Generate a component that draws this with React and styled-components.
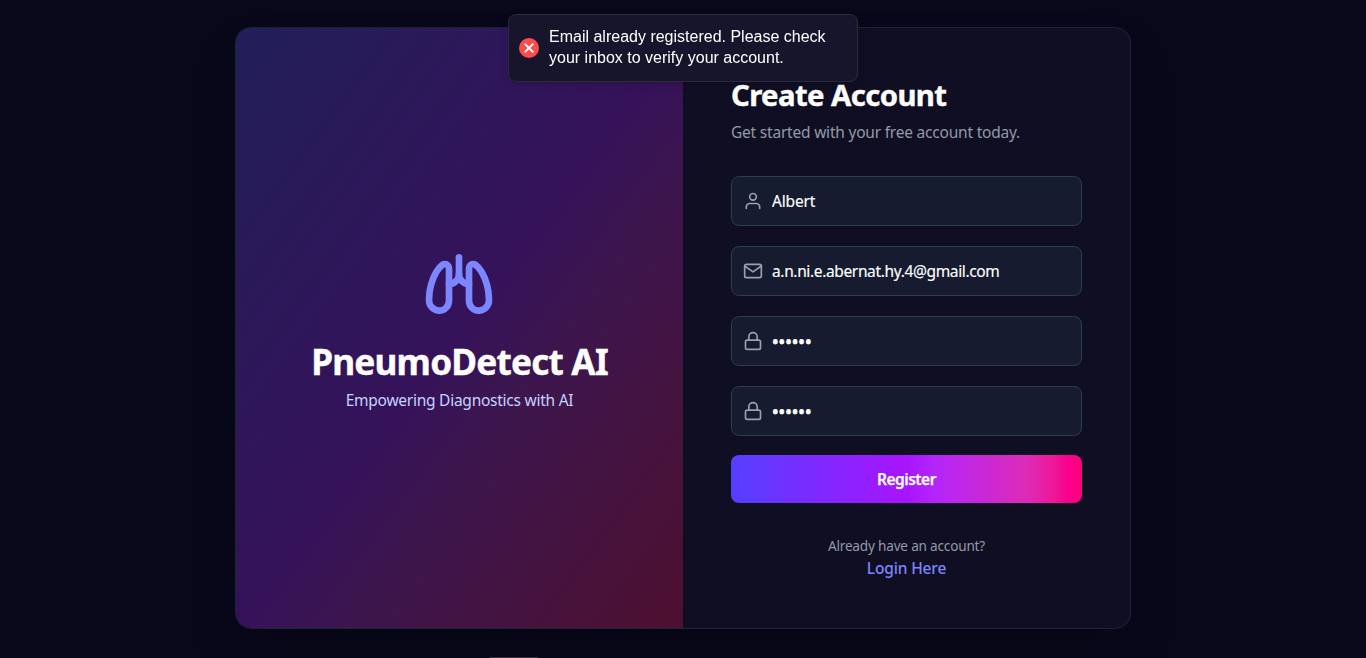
import React from "react";
import styled, { createGlobalStyle } from "styled-components";
import { FiUser, FiMail, FiLock } from "react-icons/fi";
import { TbLungs } from "react-icons/tb";

const GlobalStyle = createGlobalStyle`
  * { box-sizing: border-box; }
  body {
    margin: 0;
    background: #09081b;
    color: #fff;
    font-family: "Segoe UI", "Noto Sans", "Open Sans", sans-serif;
    overflow: hidden;
  }
`;

const Page = styled.main`
  height: 658px;
  padding-top: 27px;
  display: flex;
  flex-direction: column;
  align-items: center;
  justify-content: space-between;
  overflow: hidden;
`;

const Card = styled.section`
  width: 896px;
  height: 602px;
  display: flex;
  overflow: hidden;
  border: 1px solid #1a2637;
  border-radius: 16px;
  background: #100e23;
  box-shadow: 0 25px 50px -12px rgba(0, 0, 0, 0.25);
`;

const Brand = styled.div`
  width: 447px;
  padding-bottom: 1px;
  display: flex;
  flex-direction: column;
  align-items: center;
  justify-content: center;
  background: linear-gradient(to bottom right, #211f59, #35125a 50%, #3d164e 62%, #4e102f);
`;

const BrandIcon = styled(TbLungs)`
  color: #7c86ff;
  margin: 0 2px 17px 0;
`;

const BrandName = styled.h1`
  margin: 0;
  font-size: 35.2px;
  line-height: 40px;
  font-weight: 700;
  white-space: nowrap;
  -webkit-text-stroke: 0.4px #fff;
  letter-spacing: ${(p) => p.$track}px;
`;

const Tagline = styled.p`
  margin: 7px 0 0;
  font-size: 15.5px;
  line-height: 24px;
  color: #c6d2ff;
  letter-spacing: ${(p) => p.$track}px;
`;

const FormPanel = styled.div`
  flex: 1;
  padding: 48px 48px 0;
`;

const Title = styled.h2`
  margin: 1px 0 7px;
  font-size: 29.3px;
  line-height: 36px;
  font-weight: 700;
  white-space: nowrap;
  -webkit-text-stroke: 0.4px #fff;
  letter-spacing: ${(p) => p.$track}px;
`;

const Subtitle = styled.p`
  margin: 0 0 32px;
  font-size: 15.5px;
  line-height: 24px;
  color: #99a1af;
  opacity: 0.95;
  white-space: nowrap;
  letter-spacing: ${(p) => p.$track}px;
`;

const Form = styled.form`
  display: flex;
  flex-direction: column;
  gap: 20px;
`;

const Field = styled.label`
  height: 50px;
  padding: 0 12px 0 11px;
  display: flex;
  align-items: center;
  gap: 9px;
  border: 1px solid #2b3d51;
  border-radius: 8px;
  background: #161b2f;
  color: #99a1af;
`;

const FieldIcon = styled.svg`
  width: 20px;
  height: 20px;
  flex: none;
  stroke-width: 2;
`;

const Input = styled.input`
  flex: 1;
  min-width: 0;
  padding: 0;
  border: 0;
  outline: 0;
  background: transparent;
  color: #fff;
  font: 400 ${(p) => (p.type === "password" ? 17.5 : 15.5)}px/24px "Segoe UI", "Noto Sans", "Open Sans", sans-serif;
  -webkit-text-stroke: ${(p) => (p.type === "password" ? 0.8 : 0.15)}px #fff;
  letter-spacing: ${(p) => p.$track}px;
`;

const Submit = styled.button`
  height: 48px;
  margin-top: -1px;
  padding: 0;
  border: 0;
  border-radius: 8px;
  color: #fff;
  background: linear-gradient(to right, #553fff 0%, #a813ff 50%, #b425fb 58%, #dc2bb8 84%, #ee1899 92%, #f9008c 96%, #ff0080 98%);
  font: 600 15.5px/24px "Segoe UI", "Noto Sans", "Open Sans", sans-serif;
  -webkit-text-stroke: 0.25px #fff;
  letter-spacing: ${(p) => p.$track}px;
`;

const Footer = styled.div`
  margin-top: 32px;
  text-align: center;
`;

const Prompt = styled.p`
  margin: 0;
  font-size: 13.6px;
  line-height: 22px;
  color: #99a1af;
  opacity: 0.95;
  letter-spacing: ${(p) => p.$track}px;
`;

const LoginLink = styled.a`
  display: block;
  font-size: 15.5px;
  line-height: 23px;
  font-weight: 500;
  color: #7c86ff;
  letter-spacing: ${(p) => p.$track}px;
`;

const Toast = styled.div`
  position: fixed;
  top: 14px;
  left: 508px;
  width: 350px;
  height: 68px;
  padding: 0 10px;
  display: flex;
  align-items: center;
  gap: 10px;
  border: 1px solid #2c2a3d;
  border-radius: 8px;
  background: #17152b;
  box-shadow: 0 3px 10px rgba(0, 0, 0, 0.1), 0 3px 3px rgba(0, 0, 0, 0.05);
`;

const ToastMessage = styled.p`
  margin: 0 0 2px;
  font: 16px/21px "Liberation Sans", Arial, sans-serif;
  white-space: nowrap;
`;

const NextPanelEdge = styled.div`
  width: 48px;
  height: 1px;
  margin-right: 338px;
  background: #35343f;
`;

const ErrorIcon = () => (
  <svg width="20" height="20" viewBox="0 0 20 20" fill="none">
    <circle cx="10" cy="10" r="10" fill="#ff4b4b" />
    <path d="M5.6 5.6l8.8 8.8M14.4 5.6l-8.8 8.8" stroke="#fff" strokeWidth="2" />
  </svg>
);

const fields = [
  { name: "name", icon: FiUser, type: "text", value: "Albert", track: -0.17 },
  { name: "email", icon: FiMail, type: "text", value: "a.n.ni.e.abernat.hy.4@gmail.com", track: -0.36 },
  { name: "password", icon: FiLock, type: "password", value: "secret", track: 0 },
  { name: "confirm", icon: FiLock, type: "password", value: "secret", track: 0 },
];

export default function App() {
  return (
    <>
      <GlobalStyle />
      <Page>
        <Card>
          <Brand>
            <BrandIcon size={80} />
            <BrandName $track={-0.8}>PneumoDetect AI</BrandName>
            <Tagline $track={-0.25}>Empowering Diagnostics with AI</Tagline>
          </Brand>
          <FormPanel>
            <Title $track={-0.6}>Create Account</Title>
            <Subtitle $track={-0.21}>Get started with your free account today.</Subtitle>
            <Form>
              {fields.map(({ name, icon, type, value, track }) => (
                <Field key={name}>
                  <FieldIcon as={icon} />
                  <Input type={type} defaultValue={value} $track={track} />
                </Field>
              ))}
              <Submit type="button" $track={-0.5}>Register</Submit>
            </Form>
            <Footer>
              <Prompt $track={-0.2}>Already have an account?</Prompt>
              <LoginLink $track={-0.15}>Login Here</LoginLink>
            </Footer>
          </FormPanel>
        </Card>
        <NextPanelEdge />
      </Page>
      <Toast role="status">
        <ErrorIcon />
        <ToastMessage>
          Email already registered. Please check
          <br />
          your inbox to verify your account.
        </ToastMessage>
      </Toast>
    </>
  );
}
